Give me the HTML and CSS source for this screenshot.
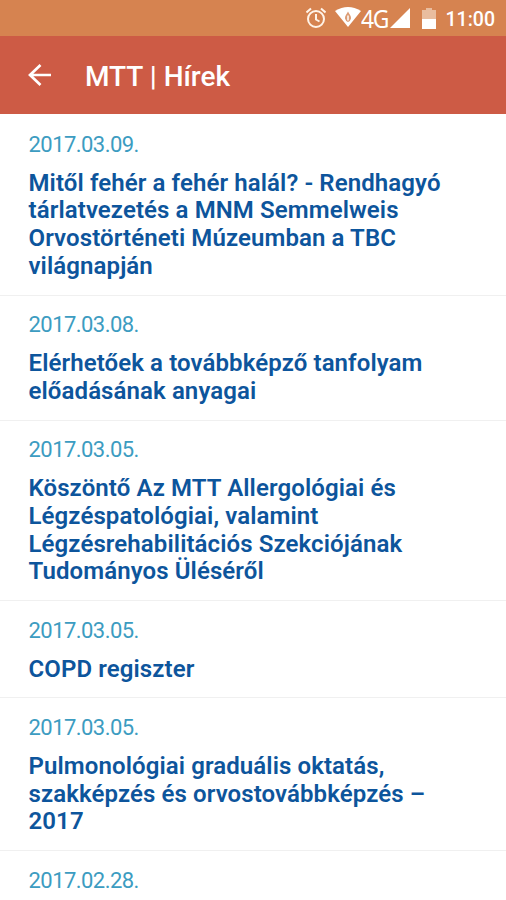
FILE: index.html
```html
<!DOCTYPE html>
<html lang="hu">
<head>
    <meta charset="UTF-8">
    <meta name="viewport" content="width=device-width, initial-scale=1.0">
    <title>MTT | Hírek</title>
    <link rel="stylesheet" href="styles.css">
</head>
<body>
    <div class="status-bar">
        <svg class="alarm" width="20" height="22" viewBox="0 0 20 22" fill="none" stroke="#fff3e8" stroke-width="2">
            <circle cx="10" cy="12" r="8"/>
            <path d="M10 7v5.500l3.500 2M0.500 5.500l4.500-4M19.500 5.500l-4.500-4"/>
        </svg>
        <svg class="wifi" width="26" height="20" viewBox="0 0 26 20">
            <path d="M0 4Q13-4 26 4L13 20z" fill="#fff"/>
            <path d="M13 4.500C14 7 16.500 9 16 11.500Q15.500 14 13 15Q10.500 14 10 11.500C9.500 9 12 7 13 4.500z" fill="#dc9c75"/>
            <path d="M13 8.500v5" stroke="#fff" stroke-width="1.500"/>
        </svg>
        <span class="network">4G</span>
        <svg class="signal" width="20" height="20" viewBox="0 0 20 20">
            <path d="M20 0v20H0z" fill="#fff"/>
        </svg>
        <svg class="battery" width="14" height="21" viewBox="0 0 14 21">
            <path d="M4 0h6v2h4v9H0V2h4z" fill="#e9bd9f"/>
            <path d="M0 11h14v10H0z" fill="#fff"/>
        </svg>
        <span class="clock">11:00</span>
    </div>
    <header class="toolbar">
        <svg class="back" width="24" height="22" viewBox="0 0 24 22" fill="none" stroke="#fff" stroke-width="2.700">
            <path d="M23 11H2M12.500 1L2 11l10.500 10"/>
        </svg>
        <h1>MTT | Hírek</h1>
    </header>
    <main class="news">
        <article class="item">
            <time>2017.03.09.</time>
            <h2>Mitől fehér a fehér halál? - Rendhagyó<br>tárlatvezetés a MNM Semmelweis<br>Orvostörténeti Múzeumban a TBC<br>világnapján</h2>
        </article>
        <article class="item">
            <time>2017.03.08.</time>
            <h2>Elérhetőek a továbbképző tanfolyam<br>előadásának anyagai</h2>
        </article>
        <article class="item">
            <time>2017.03.05.</time>
            <h2>Köszöntő Az MTT Allergológiai és<br>Légzéspatológiai, valamint<br>Légzésrehabilitációs Szekciójának<br>Tudományos Üléséről</h2>
        </article>
        <article class="item">
            <time>2017.03.05.</time>
            <h2>COPD regiszter</h2>
        </article>
        <article class="item">
            <time>2017.03.05.</time>
            <h2>Pulmonológiai graduális oktatás,<br>szakképzés és orvostovábbképzés –<br>2017</h2>
        </article>
        <article class="item">
            <time>2017.02.28.</time>
        </article>
    </main>
</body>
</html>
```
FILE: styles.css
```css
body {
    margin: 0;
    height: 900px;
    overflow: hidden;
    background-color: #fff;
    font-family: Roboto, sans-serif;
}

.status-bar {
    display: flex;
    align-items: center;
    justify-content: flex-end;
    height: 36px;
    padding-right: 11px;
    box-sizing: border-box;
    background-color: #d68350;
    color: #fff;
}

.alarm {
    margin-right: 9px;
}

.wifi {
    margin-top: -2px;
}

.network {
    width: 27px;
    font-family: "Noto Sans", sans-serif;
    font-size: 26px;
    line-height: 36px;
    letter-spacing: -1.5px;
    transform: scaleX(0.88);
    transform-origin: left;
}

.signal {
    margin: -1px 12px 0 2px;
}

.clock {
    margin: 2px 0 0 10px;
    font-size: 19.500px;
    font-weight: 500;
}

.toolbar {
    display: flex;
    align-items: center;
    height: 78px;
    padding-left: 27.500px;
    background-color: #cd5b45;
    color: #fff;
}

.toolbar h1 {
    margin: 3px 0 0 33.500px;
    font-size: 28px;
    font-weight: 500;
}

.item {
    padding: 15.500px 28px 14px 28.500px;
    border-bottom: 1px solid #f0f0f0;
}

.item:first-child {
    padding-top: 16.500px;
    padding-bottom: 14px;
}

.item time {
    display: block;
    line-height: 28px;
    font-size: 22px;
    font-weight: 400;
    letter-spacing: -0.550px;
    color: #3c9cc1;
}

.item h2 {
    margin: 11px 0 0;
    line-height: 27.750px;
    font-size: 24px;
    font-weight: 600;
    letter-spacing: 0.1px;
    color: #0d559c;
    white-space: nowrap;
}
```
